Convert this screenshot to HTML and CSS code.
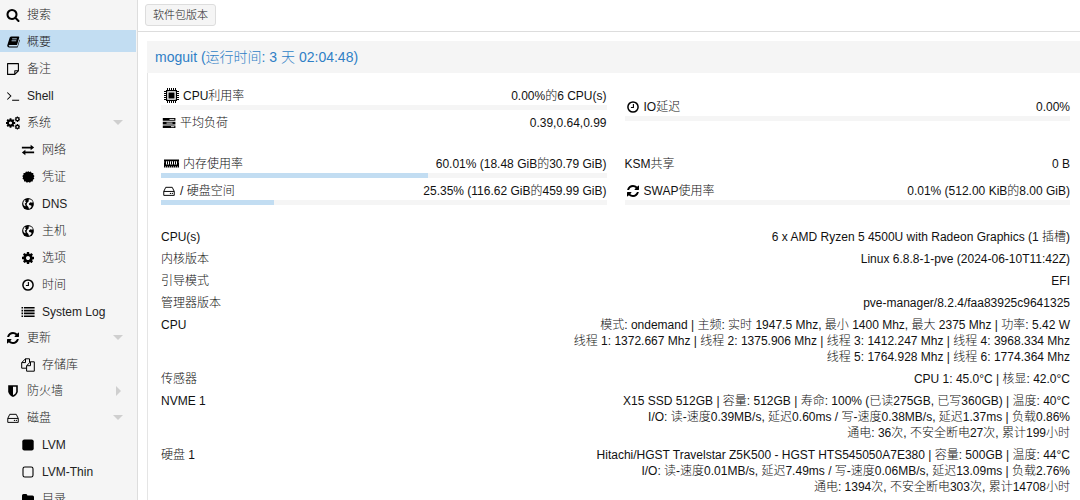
FILE: index.html
```html
<!doctype html>
<html lang="zh-CN">
<head>
    <meta charset="UTF-8">
    <meta name="viewport" content="width=device-width, initial-scale=1.0">
    <title>moguit - Proxmox VE</title>
    <link rel="stylesheet" href="styles.css">
</head>
<body>
<svg class="sprite" aria-hidden="true">
    <symbol id="search" viewBox="0 0 1792 1792"><path d="M1216 832q0-185-131.500-316.500t-316.500-131.500-316.500 131.500-131.500 316.500 131.500 316.500 316.500 131.500 316.500-131.500 131.500-316.500zm512 832q0 52-38 90t-90 38q-54 0-90-38l-343-342q-179 124-399 124-143 0-273.500-55.500t-225-150-150-225-55.500-273.500 55.500-273.500 150-225 225-150 273.500-55.500 273.500 55.500 225 150 150 225 55.500 273.500q0 220-124 399l343 343q37 37 37 90z"/></symbol>
    <symbol id="book" viewBox="-1 0 15 14"><path d="M5 1h7.300q1.200.1.900 1.300l-2.400 8H3q-1 0-1.200.8.100.8 1 .8h8.400l2.200-7.600q.6.500.4 1.200L11.700 12q-.3 1-1.200 1H2.400Q.4 12.800.3 10.800L3 2.300Q3.500 1 5 1z"/><path d="M5.600 3.600h5M5 5.700h5" stroke="#c2ddf2" stroke-width=".9"/></symbol>
    <symbol id="note" viewBox="0 0 14 14"><path d="M1.600 1.600h10.800v7.200l-3.600 3.600H1.600zM12.400 8.800H8.800v3.600" fill="none" stroke="currentColor" stroke-width="1.100" stroke-linejoin="round"/></symbol>
    <symbol id="terminal" viewBox="-1 -1 16 16"><path d="M.5 3l4 4-4 4M6 11.800h8" fill="none" stroke="currentColor" stroke-width="1.200"/></symbol>
    <symbol id="cog" viewBox="0 0 1792 1792"><path d="M1152 896q0-106-75-181t-181-75-181 75-75 181 75 181 181 75 181-75 75-181zm512-109v222q0 12-8 23t-20 13l-185 28q-19 54-39 91 35 50 107 138 10 12 10 25t-9 23q-27 37-99 108t-94 71q-12 0-26-9l-138-108q-44 23-91 38-16 136-29 186-7 28-36 28h-222q-14 0-24.500-8.500t-11.500-21.500l-28-184q-49-16-90-37l-141 107q-10 9-25 9-14 0-25-11-126-114-165-168-7-10-7-23 0-12 8-23 15-21 51-66.500t54-70.500q-27-50-41-99l-183-27q-13-2-21-12.500t-8-23.500v-222q0-12 8-23t19-13l186-28q14-46 39-92-40-57-107-138-10-12-10-24 0-10 9-23 26-36 98.500-107.500t94.500-71.500q13 0 26 10l138 107q44-23 91-38 16-136 29-186 7-28 36-28h222q14 0 24.500 8.500t11.500 21.500l28 184q49 16 90 37l142-107q9-9 24-9 13 0 25 10 129 119 165 170 7 8 7 22 0 12-8 23-15 21-51 66.500t-54 70.500q26 50 41 98l183 28q13 2 21 12.500t8 23.500z"/></symbol>
    <symbol id="cogs" viewBox="0 0 14 14"><use href="#cog" x="-1" y="1.500" width="11" height="11"/><use href="#cog" x="8.200" y="0" width="6.400" height="6.400"/><use href="#cog" x="8.200" y="7.600" width="6.400" height="6.400"/></symbol>
    <symbol id="exchange" viewBox="-1 -1 16 16"><path d="M14 4.200l-4-3.200v2.200H0v2h10v2.200zM0 9.800l4 3.200v-2.200h10v-2H4V6.600z"/></symbol>
    <symbol id="certificate" viewBox="0 0 14 14"><path d="M7 1.100l1.300 1L9.800 1.400l.9 1.500 1.600.2v1.700l1.200 1.100-.8 1.400.6 1.500-1.400.9-.2 1.700-1.700.1-1 1.300-1.600-.7-1.600.7-1-1.300-1.700-.1-.2-1.700-1.400-.9.600-1.500-.8-1.400 1.200-1.100V3.100l1.600-.2.900-1.500 1.500.7z"/></symbol>
    <symbol id="globe" viewBox="0 0 14 14"><circle cx="7" cy="7" r="5.900"/><path d="M7.800 2.300l2.400.4 1.600 2.100-.5 1-1.900-.5-1.600 1.500.5 1.200 1.900.4.300 1.400-1.600 1.800-1 .1-.5-1.800-1.800-1.900.4-2 1.600-1.500zM3.100 3.500l1.500-.6-.4 1.700 1 1-1.500 1.200.9 1.500-.4 1.300-1.600-1.700-.4-2z" fill="#f5f5f5"/></symbol>
    <symbol id="clock" viewBox="0 0 14 14"><path d="M12.100 7A5.100 5.100 0 1 1 1.900 7a5.100 5.100 0 0 1 10.200 0z" fill="none" stroke="currentColor" stroke-width="1.500"/><path d="M7.400 4v3.500H4.900" fill="none" stroke="currentColor" stroke-width="1.100"/></symbol>
    <symbol id="list" viewBox="0 0 14 14"><path d="M.5 2h1.600v1.600H.5zM3 2h10.600v1.600H3zM.5 4.800h1.600v1.600H.5zM3 4.800h10.600v1.600H3zM.5 7.600h1.600v1.600H.5zM3 7.600h10.600v1.600H3zM.5 10.400h1.600V12H.5zM3 10.400h10.600V12H3z"/></symbol>
    <symbol id="refresh" viewBox="0 0 1792 1792"><path d="M1639 1056q0 5-1 7-64 268-268 434.500t-478 166.500q-146 0-282.500-55t-243.500-157l-129 129q-19 19-45 19t-45-19-19-45v-448q0-26 19-45t45-19h448q26 0 45 19t19 45-19 45l-137 137q71 66 161 102t187 36q134 0 250-65t186-179q11-17 53-117 8-23 30-23h192q13 0 22.500 9.500t9.500 22.500zm25-800v448q0 26-19 45t-45 19h-448q-26 0-45-19t-19-45 19-45l138-138q-148-137-349-137-134 0-250 65t-186 179q-11 17-53 117-8 23-30 23h-199q-13 0-22.500-9.500t-9.500-22.500v-7q65-268 270-434.500t480-166.500q146 0 284 55.500t245 156.500l130-129q19-19 45-19t45 19 19 45z"/></symbol>
    <symbol id="files" viewBox="0 0 14 14"><path d="M4.500.8h4v3.400M.7 4.600L4.500.8v3.800H.7v5.600h4.800M9.500 3.800h3.800v9.400H5.600V7.700zv3.900H5.600" fill="none" stroke="currentColor" stroke-width="1" stroke-linejoin="round"/></symbol>
    <symbol id="shield" viewBox="0 0 14 14"><path d="M2.200 1.200h9.600v6.300q-.3 3.400-4.800 5.600-4.500-2.200-4.800-5.600z"/><path d="M7 2.800h3.200v4.900Q10 9.700 7 11.300z" fill="#f5f5f5"/></symbol>
    <symbol id="hdd" viewBox="-1 -1 16 16"><path d="M1 7.500v4.500h12V7.500l-2.300-4.700H3.300zh12" fill="none" stroke="currentColor" stroke-width="1.100" stroke-linejoin="round"/><circle cx="8.600" cy="9.800" r=".7"/><circle cx="10.800" cy="9.800" r=".7"/></symbol>
    <symbol id="square" viewBox="0 0 14 14"><rect x="1.300" y="1.500" width="11.400" height="11" rx="2"/></symbol>
    <symbol id="square-o" viewBox="0 0 14 14"><rect x="2" y="2" width="10" height="10" rx="1.800" fill="none" stroke="currentColor" stroke-width="1.100"/></symbol>
    <symbol id="folder" viewBox="0 0 14 14"><path d="M1 3.500Q1 2 2.500 2h2.700q1 0 1.200 1.500h5.100Q13 3.500 13 5v6q0 1.500-1.500 1.500h-9Q1 12.500 1 11z"/></symbol>
    <symbol id="server" viewBox="0 0 14 14"><path d="M.8 2h12.600v2.700H.8zM.8 5.700h12.600v2.700H.8zM.8 9.400h12.600v2.700H.8z"/><path d="M7.500 3.400h4.800M4.500 7.100h6M9 10.700h3.300" stroke="#fff" stroke-width=".9"/></symbol>
    <symbol id="cpu" viewBox="0 0 15 15"><rect x="2.600" y="2.600" width="9.800" height="9.800" fill="none" stroke="currentColor" stroke-width="1.200"/><rect x="4.500" y="4.500" width="6" height="6"/><path d="M3 1h9.500M3 14h9.500M1 3v9.500M14 3v9.500" stroke="currentColor" stroke-width="2" stroke-dasharray="1 1"/></symbol>
    <symbol id="ram" viewBox="0 0 15 15"><path d="M0 3.500h15v1.600q-.8.900 0 1.800v4.600H0V6.900q.8-.9 0-1.800z"/><path d="M2 5.200h3v3.300H2zM6 5.200h3v3.300H6zM10 5.200h3v3.300h-3z" fill="#fff"/><path d="M3 5.200h1v3.300H3zM7 5.200h1v3.300H7zM11 5.200h1v3.300h-1z"/><path d="M1 11h13" stroke="#fff" stroke-width="1.200" stroke-dasharray="1 1"/></symbol>
</svg>
<div class="page">
    <nav class="sidebar">
        <ul class="menu">
            <li><a href="#" class="item"><svg class="icon"><use href="#search"/></svg>搜索</a></li>
            <li><a href="#" class="item active"><svg class="icon"><use href="#book"/></svg>概要</a></li>
            <li><a href="#" class="item"><svg class="icon"><use href="#note"/></svg>备注</a></li>
            <li><a href="#" class="item"><svg class="icon"><use href="#terminal"/></svg>Shell</a></li>
            <li>
                <a href="#" class="item open"><svg class="icon"><use href="#cogs"/></svg>系统</a>
                <ul class="submenu">
                    <li><a href="#" class="item"><svg class="icon"><use href="#exchange"/></svg>网络</a></li>
                    <li><a href="#" class="item"><svg class="icon"><use href="#certificate"/></svg>凭证</a></li>
                    <li><a href="#" class="item"><svg class="icon"><use href="#globe"/></svg>DNS</a></li>
                    <li><a href="#" class="item"><svg class="icon"><use href="#globe"/></svg>主机</a></li>
                    <li><a href="#" class="item"><svg class="icon"><use href="#cog"/></svg>选项</a></li>
                    <li><a href="#" class="item"><svg class="icon"><use href="#clock"/></svg>时间</a></li>
                    <li><a href="#" class="item"><svg class="icon"><use href="#list"/></svg>System Log</a></li>
                </ul>
            </li>
            <li>
                <a href="#" class="item open"><svg class="icon"><use href="#refresh"/></svg>更新</a>
                <ul class="submenu">
                    <li><a href="#" class="item"><svg class="icon"><use href="#files"/></svg>存储库</a></li>
                </ul>
            </li>
            <li><a href="#" class="item closed"><svg class="icon"><use href="#shield"/></svg>防火墙</a></li>
            <li>
                <a href="#" class="item open"><svg class="icon"><use href="#hdd"/></svg>磁盘</a>
                <ul class="submenu">
                    <li><a href="#" class="item"><svg class="icon"><use href="#square"/></svg>LVM</a></li>
                    <li><a href="#" class="item"><svg class="icon"><use href="#square-o"/></svg>LVM-Thin</a></li>
                    <li><a href="#" class="item"><svg class="icon"><use href="#folder"/></svg>目录</a></li>
                </ul>
            </li>
        </ul>
    </nav>
    <main class="main">
        <div class="toolbar">
            <button type="button" class="btn">软件包版本</button>
        </div>
        <section class="panel">
            <h1 class="panel-title">moguit (运行时间: 3 天 02:04:48)</h1>
            <div class="panel-body">
                <div class="stats">
                    <div class="stat-col">
                        <div class="stat">
                            <div class="stat-text"><span class="stat-name wide"><svg class="icon"><use href="#cpu"/></svg>CPU利用率</span><span>0.00%的6 CPU(s)</span></div>
                            <div class="bar"></div>
                        </div>
                        <div class="stat">
                            <div class="stat-text"><span class="stat-name"><svg class="icon"><use href="#server"/></svg>平均负荷</span><span>0.39,0.64,0.99</span></div>
                        </div>
                    </div>
                    <div class="stat-col">
                        <div class="stat">
                            <div class="stat-text"><span class="stat-name"><svg class="icon"><use href="#clock"/></svg>IO延迟</span><span>0.00%</span></div>
                            <div class="bar"></div>
                        </div>
                    </div>
                    <div class="stat-col">
                        <div class="stat">
                            <div class="stat-text"><span class="stat-name wide"><svg class="icon"><use href="#ram"/></svg>内存使用率</span><span>60.01% (18.48 GiB的30.79 GiB)</span></div>
                            <div class="bar"><div class="bar-fill" style="width: 60.01%"></div></div>
                        </div>
                        <div class="stat">
                            <div class="stat-text"><span class="stat-name"><svg class="icon"><use href="#hdd"/></svg>/ 硬盘空间</span><span>25.35% (116.62 GiB的459.99 GiB)</span></div>
                            <div class="bar"><div class="bar-fill" style="width: 25.35%"></div></div>
                        </div>
                    </div>
                    <div class="stat-col">
                        <div class="stat">
                            <div class="stat-text"><span>KSM共享</span><span>0 B</span></div>
                            <div class="bar blank"></div>
                        </div>
                        <div class="stat">
                            <div class="stat-text"><span class="stat-name"><svg class="icon"><use href="#refresh"/></svg>SWAP使用率</span><span>0.01% (512.00 KiB的8.00 GiB)</span></div>
                            <div class="bar"></div>
                        </div>
                    </div>
                </div>
                <dl class="info">
                    <div class="info-row"><dt>CPU(s)</dt><dd>6 x AMD Ryzen 5 4500U with Radeon Graphics (1 插槽)</dd></div>
                    <div class="info-row"><dt>内核版本</dt><dd>Linux 6.8.8-1-pve (2024-06-10T11:42Z)</dd></div>
                    <div class="info-row"><dt>引导模式</dt><dd>EFI</dd></div>
                    <div class="info-row"><dt>管理器版本</dt><dd>pve-manager/8.2.4/faa83925c9641325</dd></div>
                    <div class="info-row"><dt>CPU</dt><dd>模式: ondemand | 主频: 实时 1947.5 Mhz, 最小 1400 Mhz, 最大 2375 Mhz | 功率: 5.42 W<br>线程 1: 1372.667 Mhz | 线程 2: 1375.906 Mhz | 线程 3: 1412.247 Mhz | 线程 4: 3968.334 Mhz<br>线程 5: 1764.928 Mhz | 线程 6: 1774.364 Mhz</dd></div>
                    <div class="info-row"><dt>传感器</dt><dd>CPU 1: 45.0°C | 核显: 42.0°C</dd></div>
                    <div class="info-row"><dt>NVME 1</dt><dd>X15 SSD 512GB | 容量: 512GB | 寿命: 100% (已读275GB, 已写360GB) | 温度: 40°C<br>I/O: 读-速度0.39MB/s, 延迟0.60ms / 写-速度0.38MB/s, 延迟1.37ms | 负载0.86%<br>通电: 36次, 不安全断电27次, 累计199小时</dd></div>
                    <div class="info-row"><dt>硬盘 1</dt><dd>Hitachi/HGST Travelstar Z5K500 - HGST HTS545050A7E380 | 容量: 500GB | 温度: 44°C<br>I/O: 读-速度0.01MB/s, 延迟7.49ms / 写-速度0.06MB/s, 延迟13.09ms | 负载2.76%<br>通电: 1394次, 不安全断电303次, 累计14708小时</dd></div>
                </dl>
            </div>
        </section>
    </main>
</div>
</body>
</html>
```

FILE: styles.css
```css
* {
    box-sizing: border-box;
    margin: 0;
    padding: 0;
}
body {
    font-family: "Liberation Sans", "Noto Sans CJK SC", sans-serif;
    font-size: 12px;
    font-weight: 300;
    line-height: 16px;
    color: #111;
    background: #fff;
}
.sprite {
    position: absolute;
    width: 0;
    height: 0;
}
.page {
    display: flex;
    height: 100vh;
    overflow: hidden;
}

/* 左侧菜单 */
.sidebar {
    flex: 0 0 138px;
    padding: 3px 1px 0 0;
    background: #f5f5f5;
    border-right: 1px solid #ddd;
    overflow: hidden;
}
.menu, .submenu {
    list-style: none;
}
.submenu {
    margin-bottom: -1px;
}
.item {
    display: flex;
    align-items: center;
    gap: 7px;
    height: 22px;
    margin-bottom: 5px;
    padding: 1px 13px 0 6px;
    color: #222;
    text-decoration: none;
}
.submenu .item {
    padding-left: 21px;
}
.item.active {
    background: #c2ddf2;
}
.item.open::after, .item.closed::after {
    content: "";
    margin-left: auto;
    border: 5px solid transparent;
}
.item.open::after {
    border-top-color: #cfcfcf;
    border-bottom: 0;
}
.item.closed::after {
    margin-right: 2px;
    border-left-color: #cfcfcf;
    border-right: 0;
}
.icon {
    flex: none;
    width: 14px;
    height: 14px;
    fill: currentColor;
    color: #000;
}

/* 右侧内容 */
.main {
    display: flex;
    flex-direction: column;
    flex: 1;
    min-width: 0;
}
.toolbar {
    height: 32px;
    padding: 4px 7px;
    border-bottom: 1px solid #ddd;
}
.btn {
    height: 22px;
    padding: 0 7px;
    font: inherit;
    font-size: 11px;
    color: #222;
    background: #f5f5f5;
    border: 1px solid #ddd;
    border-radius: 3px;
}
.panel {
    display: flex;
    flex-direction: column;
    flex: 1;
    margin: 9px 0 0 9px;
}
.panel-title {
    padding: 0 8px;
    font-size: 14px;
    font-weight: 300;
    line-height: 32px;
    color: #2f7fc6;
    background: #f5f5f5;
}
.panel-body {
    flex: 1;
    padding: 13px 10px 0 13px;
    border-left: 1px solid #e5e5e5;
}
.stats {
    display: grid;
    grid-template-columns: 1fr 1fr;
    gap: 22px 18px;
}
.stat-col {
    display: flex;
    flex-direction: column;
    justify-content: center;
    gap: 3px;
    min-height: 46px;
}
.stat-text {
    display: flex;
    justify-content: space-between;
    height: 19px;
    line-height: 20px;
}
.stat-name {
    display: flex;
    align-items: center;
    gap: 4px;
    padding-left: 1px;
}
.stat-name.wide {
    padding-left: 3px;
}
.wide .icon {
    width: 15px;
    height: 15px;
}
.bar {
    height: 5px;
    background: #f5f5f5;
}
.bar.blank {
    background: none;
}
.bar-fill {
    height: 100%;
    background: #c2ddf2;
}
.info {
    display: flex;
    flex-direction: column;
    gap: 6px;
    padding-top: 24px;
}
.info-row {
    display: flex;
    justify-content: space-between;
}
.info-row dd {
    text-align: right;
}
```
